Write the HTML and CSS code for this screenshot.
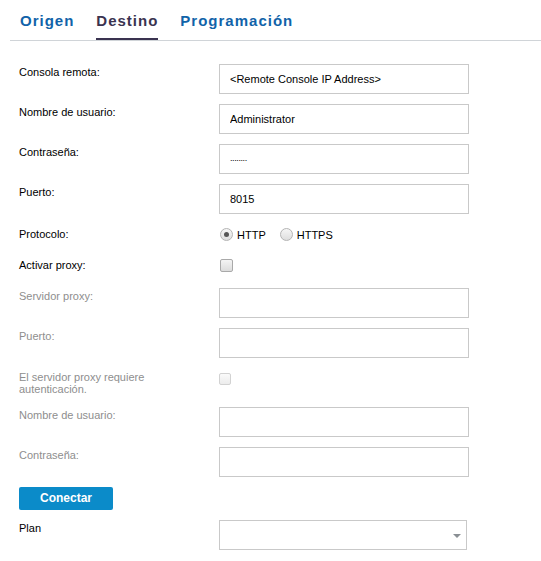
FILE: index.html
```html
<!DOCTYPE html>
<html lang="es">
<head>
<meta charset="utf-8">
<title>Destino</title>
<link rel="stylesheet" href="styles.css">
</head>
<body>
<nav class="tabs">
  <span class="tab">Origen</span>
  <span class="tab active">Destino</span>
  <span class="tab">Programación</span>
</nav>
<form class="form">
  <div class="row">
    <label class="label">Consola remota:</label>
    <input class="field" type="text" value="&lt;Remote Console IP Address&gt;">
  </div>
  <div class="row">
    <label class="label">Nombre de usuario:</label>
    <input class="field" type="text" value="Administrator">
  </div>
  <div class="row">
    <label class="label">Contraseña:</label>
    <input class="field pw" type="text" value="........">
  </div>
  <div class="row">
    <label class="label">Puerto:</label>
    <input class="field" type="text" value="8015">
  </div>
  <div class="row compact">
    <label class="label">Protocolo:</label>
    <div class="choices">
      <span class="radio checked"></span><span class="opt">HTTP</span>
      <span class="radio"></span><span class="opt">HTTPS</span>
    </div>
  </div>
  <div class="row compact proxy">
    <label class="label">Activar proxy:</label>
    <div class="choices"><span class="check"></span></div>
  </div>
  <div class="row">
    <label class="label off">Servidor proxy:</label>
    <input class="field" type="text" value="">
  </div>
  <div class="row">
    <label class="label off">Puerto:</label>
    <input class="field" type="text" value="">
  </div>
  <div class="row auth">
    <label class="label off two">El servidor proxy requiere<br>autenticación.</label>
    <div class="authbox"><span class="check disabled"></span></div>
  </div>
  <div class="row">
    <label class="label off">Nombre de usuario:</label>
    <input class="field" type="text" value="">
  </div>
  <div class="row">
    <label class="label off">Contraseña:</label>
    <input class="field" type="text" value="">
  </div>
  <div class="row">
    <button class="btn" type="button">Conectar</button>
  </div>
  <div class="row">
    <label class="label">Plan</label>
    <div class="select"><span class="arrow"></span></div>
  </div>
</form>
</body>
</html>
```

FILE: styles.css
```css
html, body {
  margin: 0;
  padding: 0;
  background: #ffffff;
  font-family: "Liberation Sans", Arial, sans-serif;
  color: #000;
}

.tabs {
  display: flex;
  margin-left: 10px;
  padding-left: 10px;
  border-bottom: 1px solid #d0d4d8;
}

.tab {
  padding-top: 12px;
  padding-bottom: 8px;
  margin-right: 22px;
  font-size: 15px;
  line-height: 18px;
  font-weight: bold;
  letter-spacing: 1px;
  color: #1163a9;
  border-bottom: 2px solid transparent;
}

.tab.active {
  color: #3a3350;
  border-bottom-color: #3a3350;
}

.form {
  padding: 23px 0 0 19px;
  margin: 0;
}

.row {
  display: flex;
  align-items: flex-start;
  margin-bottom: 10px;
}

.label {
  width: 200px;
  flex: none;
  padding-top: 1px;
  font-size: 11px;
  line-height: 14px;
  color: #000;
}

.label.off {
  color: #8e8e8e;
}

.field {
  box-sizing: border-box;
  width: 250px;
  height: 30px;
  margin: 0;
  padding: 0 10px;
  border: 1px solid #c9c9c9;
  border-radius: 0;
  background: #fff;
  font-family: "Liberation Sans", Arial, sans-serif;
  font-size: 11px;
  color: #000;
  outline: none;
}

.field.pw {
  font-size: 9px;
  letter-spacing: -0.4px;
  padding-bottom: 3px;
}

.compact .label {
  padding-top: 3px;
}

.compact.proxy {
  margin-bottom: 12px;
}

.choices {
  height: 21px;
  display: flex;
  align-items: center;
  padding-left: 1px;
}

.radio {
  box-sizing: border-box;
  width: 13px;
  height: 13px;
  border-radius: 50%;
  border: 1px solid #b4b4b4;
  background: linear-gradient(#f6f6f6, #dedede);
  display: flex;
  align-items: center;
  justify-content: center;
}

.radio.checked::after {
  content: "";
  width: 5px;
  height: 5px;
  border-radius: 50%;
  background: #555;
}

.opt {
  font-size: 11px;
  margin-left: 4px;
  margin-right: 14px;
}

.check {
  display: block;
  box-sizing: border-box;
  width: 13px;
  height: 13px;
  border: 1px solid #a9a9a9;
  border-radius: 2px;
  background: linear-gradient(#f4f4f4, #dcdcdc);
}

.check.disabled {
  width: 12px;
  height: 12px;
  border-color: #d2d2d2;
  background: linear-gradient(#fafafa, #ececec);
}

.row.auth {
  height: 29px;
}

.label.two {
  padding-top: 3px;
  line-height: 12px;
}

.authbox {
  padding-top: 5px;
}

.btn {
  box-sizing: border-box;
  width: 94px;
  height: 23px;
  margin: 0;
  padding: 0 0 2px;
  border: none;
  border-radius: 2px;
  background: #0b8bc9;
  color: #fff;
  font-family: "Liberation Sans", Arial, sans-serif;
  font-size: 12px;
  font-weight: bold;
}

.select {
  box-sizing: border-box;
  width: 248px;
  height: 30px;
  border: 1px solid #c9c9c9;
  display: flex;
  align-items: center;
  justify-content: flex-end;
  padding-right: 5px;
}

.arrow {
  width: 0;
  height: 0;
  border-left: 4px solid transparent;
  border-right: 4px solid transparent;
  border-top: 4px solid #8a8f94;
  margin-top: 1px;
}
```
